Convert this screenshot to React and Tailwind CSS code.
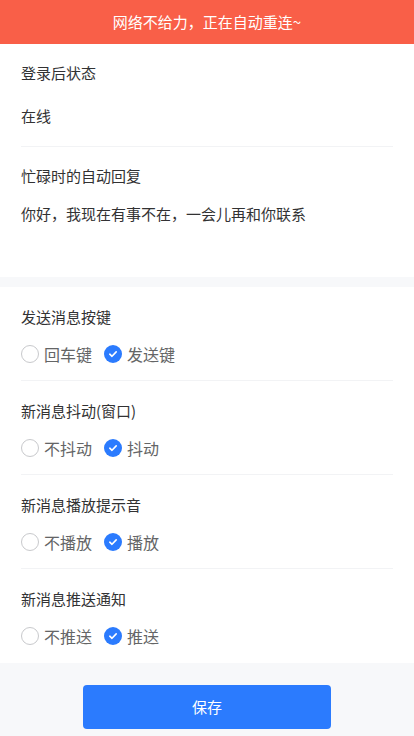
import React from 'react'

const font = { fontFamily: '"Noto Sans CJK SC", "Liberation Sans", sans-serif' }

function Radio({ label, checked }) {
  return (
    <div className="flex items-center mr-3">
      {checked ? (
        <span className="w-[18px] h-[18px] rounded-full bg-[#2b7bfe] flex items-center justify-center">
          <svg width="10" height="10" viewBox="0 0 10 10" fill="none">
            <path d="M1.8 5.2 L4 7.3 L8.2 2.9" stroke="white" strokeWidth="1.6" strokeLinecap="round" strokeLinejoin="round" />
          </svg>
        </span>
      ) : (
        <span className="w-[18px] h-[18px] rounded-full border border-[#c8c9cc] bg-white" />
      )}
      <span className="ml-[5px] text-[16px] leading-[22px] text-[#646566]">{label}</span>
    </div>
  )
}

const groups = [
  { title: '发送消息按键', off: '回车键', on: '发送键' },
  { title: '新消息抖动(窗口)', off: '不抖动', on: '抖动' },
  { title: '新消息播放提示音', off: '不播放', on: '播放' },
  { title: '新消息推送通知', off: '不推送', on: '推送' },
]

export default function App() {
  return (
    <div className="w-[414px] h-[736px] bg-[#f7f8fa] flex flex-col" style={font}>
      <div className="h-[44px] bg-[#f95f48] text-white text-[15px] flex items-center justify-center">
        网络不给力，正在自动重连~
      </div>

      <div className="bg-white h-[233px] px-[21px] text-[15px] leading-[22px] text-[#323233]">
        <div className="pt-[18px] pb-[19px] border-b border-[#f2f3f5]">
          <div>登录后状态</div>
          <div className="mt-[21px]">在线</div>
        </div>
        <div className="pt-[18px]">
          <div>忙碌时的自动回复</div>
          <div className="mt-[16px]">你好，我现在有事不在，一会儿再和你联系</div>
        </div>
      </div>

      <div className="h-[10px]" />

      <div className="bg-white px-[21px] text-[15px] leading-[22px] text-[#323233]">
        {groups.map((g, i) => (
          <div
            key={g.title}
            className={'pt-[19px] pb-[15px] ' + (i < groups.length - 1 ? 'border-b border-[#f2f3f5]' : 'pb-[16px]')}
          >
            <div>{g.title}</div>
            <div className="flex mt-[15px]">
              <Radio label={g.off} />
              <Radio label={g.on} checked />
            </div>
          </div>
        ))}
      </div>

      <div className="flex justify-center pt-[22px]">
        <button className="w-[248px] h-[44px] rounded-[4px] bg-[#2b7bfe] text-white text-[15px]">保存</button>
      </div>
    </div>
  )
}
